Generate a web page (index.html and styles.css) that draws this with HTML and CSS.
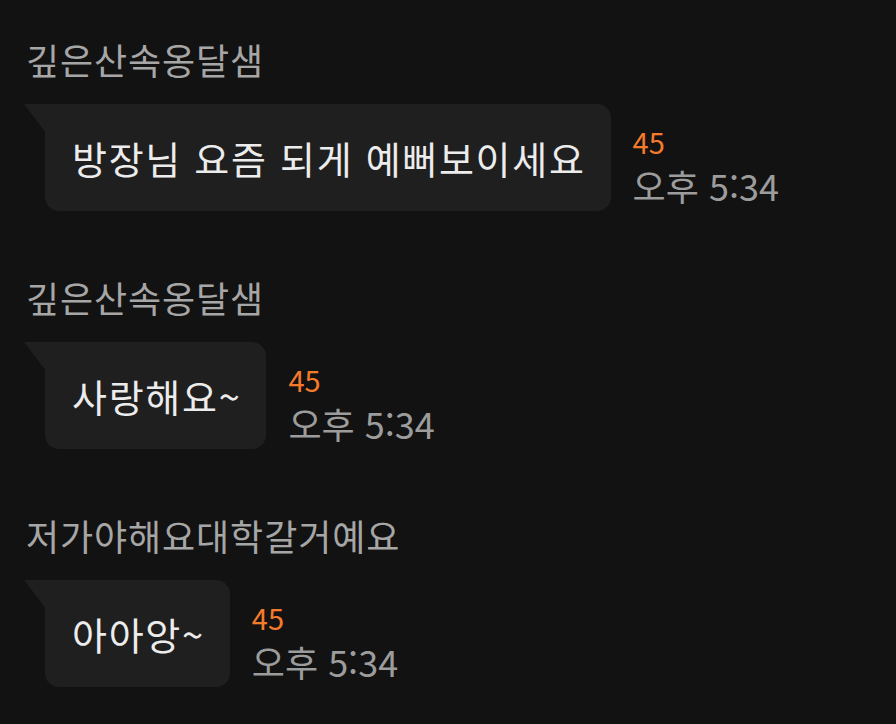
FILE: index.html
```html
<!DOCTYPE html>
<html lang="ko">
<head>
  <meta charset="UTF-8">
  <title>채팅</title>
  <link rel="stylesheet" href="styles.css">
</head>
<body>

  <div class="chat">

    <div class="msg">
      <div class="name">깊은산속옹달샘</div>
      <div class="line">
        <div class="bubble">방장님 요즘 되게 예뻐보이세요</div>
        <div class="meta">
          <span class="unread">45</span>
          <span class="time">오후 5:34</span>
        </div>
      </div>
    </div>

    <div class="msg">
      <div class="name">깊은산속옹달샘</div>
      <div class="line">
        <div class="bubble">사랑해요~</div>
        <div class="meta">
          <span class="unread">45</span>
          <span class="time">오후 5:34</span>
        </div>
      </div>
    </div>

    <div class="msg">
      <div class="name">저가야해요대학갈거예요</div>
      <div class="line">
        <div class="bubble">아아앙~</div>
        <div class="meta">
          <span class="unread">45</span>
          <span class="time">오후 5:34</span>
        </div>
      </div>
    </div>

  </div>

</body>
</html>
```

FILE: styles.css
```css
html, body {
  margin: 0;
  padding: 0;
  background: #121212;
}

body {
  font-family: "Noto Sans CJK KR", "Noto Sans", sans-serif;
  width: 896px;
  height: 724px;
  overflow: hidden;
}

.chat {
  display: flex;
  flex-direction: column;
  gap: 62px;
  padding-top: 35px;
}

.msg {
  display: flex;
  flex-direction: column;
  gap: 21px;
}

.name {
  margin-left: 26px;
  font-size: 36px;
  line-height: 48px;
  letter-spacing: 0.9px;
  color: #a6a6a6;
}

.line {
  display: flex;
  align-items: flex-start;
  gap: 22px;
  margin-left: 45px;
}

.bubble {
  position: relative;
  display: flex;
  align-items: center;
  height: 107px;
  padding: 0 25px 0 27px;
  background: #1f1f1f;
  border-radius: 0 14px 14px 14px;
  font-size: 38px;
  letter-spacing: 1.7px;
  color: #ececec;
  white-space: nowrap;
}

/* little tail on the top-left corner */
.bubble::before {
  content: "";
  position: absolute;
  left: -21px;
  top: 0;
  width: 22px;
  height: 29px;
  background: #1f1f1f;
  clip-path: polygon(0 0, 100% 0, 100% 100%);
}

.meta {
  display: flex;
  flex-direction: column;
  padding-top: 20px;
  white-space: nowrap;
}

.unread {
  font-size: 29px;
  line-height: 34px;
  color: #f47b2b;
}

.time {
  margin-top: 6px;
  font-size: 36px;
  line-height: 42px;
  color: #9c9c9c;
}
```
